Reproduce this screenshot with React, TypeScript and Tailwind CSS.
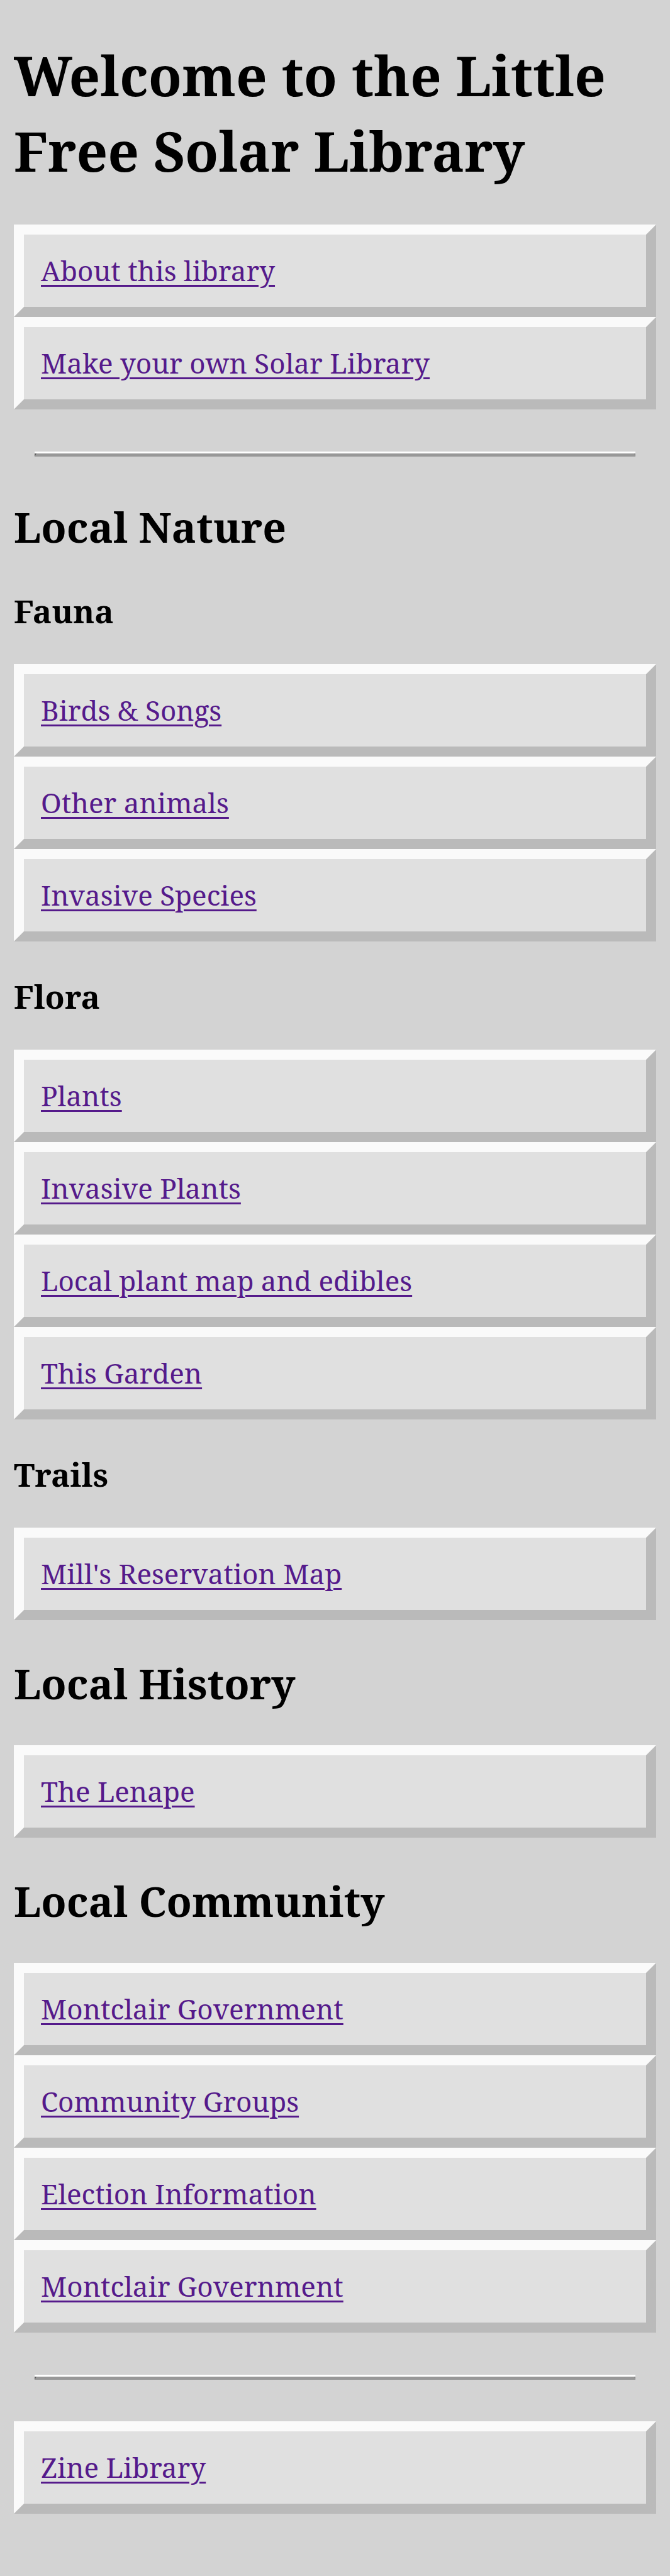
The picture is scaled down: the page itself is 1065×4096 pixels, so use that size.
function Heading({ children }: { children: string }) {
  return (
    <h2 className="mt-[55px] mb-[54px] text-[66px] leading-[90px] font-bold">{children}</h2>
  );
}

function Subheading({ children }: { children: string }) {
  return (
    <h3 className="mt-[52px] mb-[50px] text-[51px] leading-[70px] font-bold">{children}</h3>
  );
}

function Rule() {
  return (
    <hr className="mx-[33px] mt-[70px] mb-[66px] h-[5px] border-t-0 border-r-2 border-b-[5px] border-l-3 border-r-[#808080] border-b-[#989898] border-l-[#5a5a5a] shadow-[0_-3px_0_#ffffff]" />
  );
}

function Links({ items }: { items: string[] }) {
  return (
    <ul>
      {items.map((item, i) => (
        <li
          key={i}
          className="border-16 border-t-[#fafafa] border-r-[#bababa] border-b-[#bababa] border-l-[#fafafa] bg-[#e0e0e0] px-[27px] pt-[27px] pb-[28px] text-[44px] leading-[60px]"
        >
          <a href="#" className="text-[#551a8b] underline decoration-[3px] underline-offset-[6px]">
            {item}
          </a>
        </li>
      ))}
    </ul>
  );
}

export default function App() {
  return (
    <main className="flow-root min-h-screen bg-[#d3d3d3] px-[22px] pb-[58px] font-['Noto_Serif',serif] text-black">
      <h1 className="mt-[59px] mb-[58px] text-[87px] leading-[120px] font-bold">
        Welcome to the Little Free Solar Library
      </h1>
      <Links items={['About this library', 'Make your own Solar Library']} />
      <Rule />

      <Heading>Local Nature</Heading>
      <Subheading>Fauna</Subheading>
      <Links items={['Birds & Songs', 'Other animals', 'Invasive Species']} />
      <Subheading>Flora</Subheading>
      <Links items={['Plants', 'Invasive Plants', 'Local plant map and edibles', 'This Garden']} />
      <Subheading>Trails</Subheading>
      <Links items={["Mill's Reservation Map"]} />

      <Heading>Local History</Heading>
      <Links items={['The Lenape']} />

      <Heading>Local Community</Heading>
      <Links
        items={[
          'Montclair Government',
          'Community Groups',
          'Election Information',
          'Montclair Government',
        ]}
      />
      <Rule />
      <Links items={['Zine Library']} />
    </main>
  );
}
